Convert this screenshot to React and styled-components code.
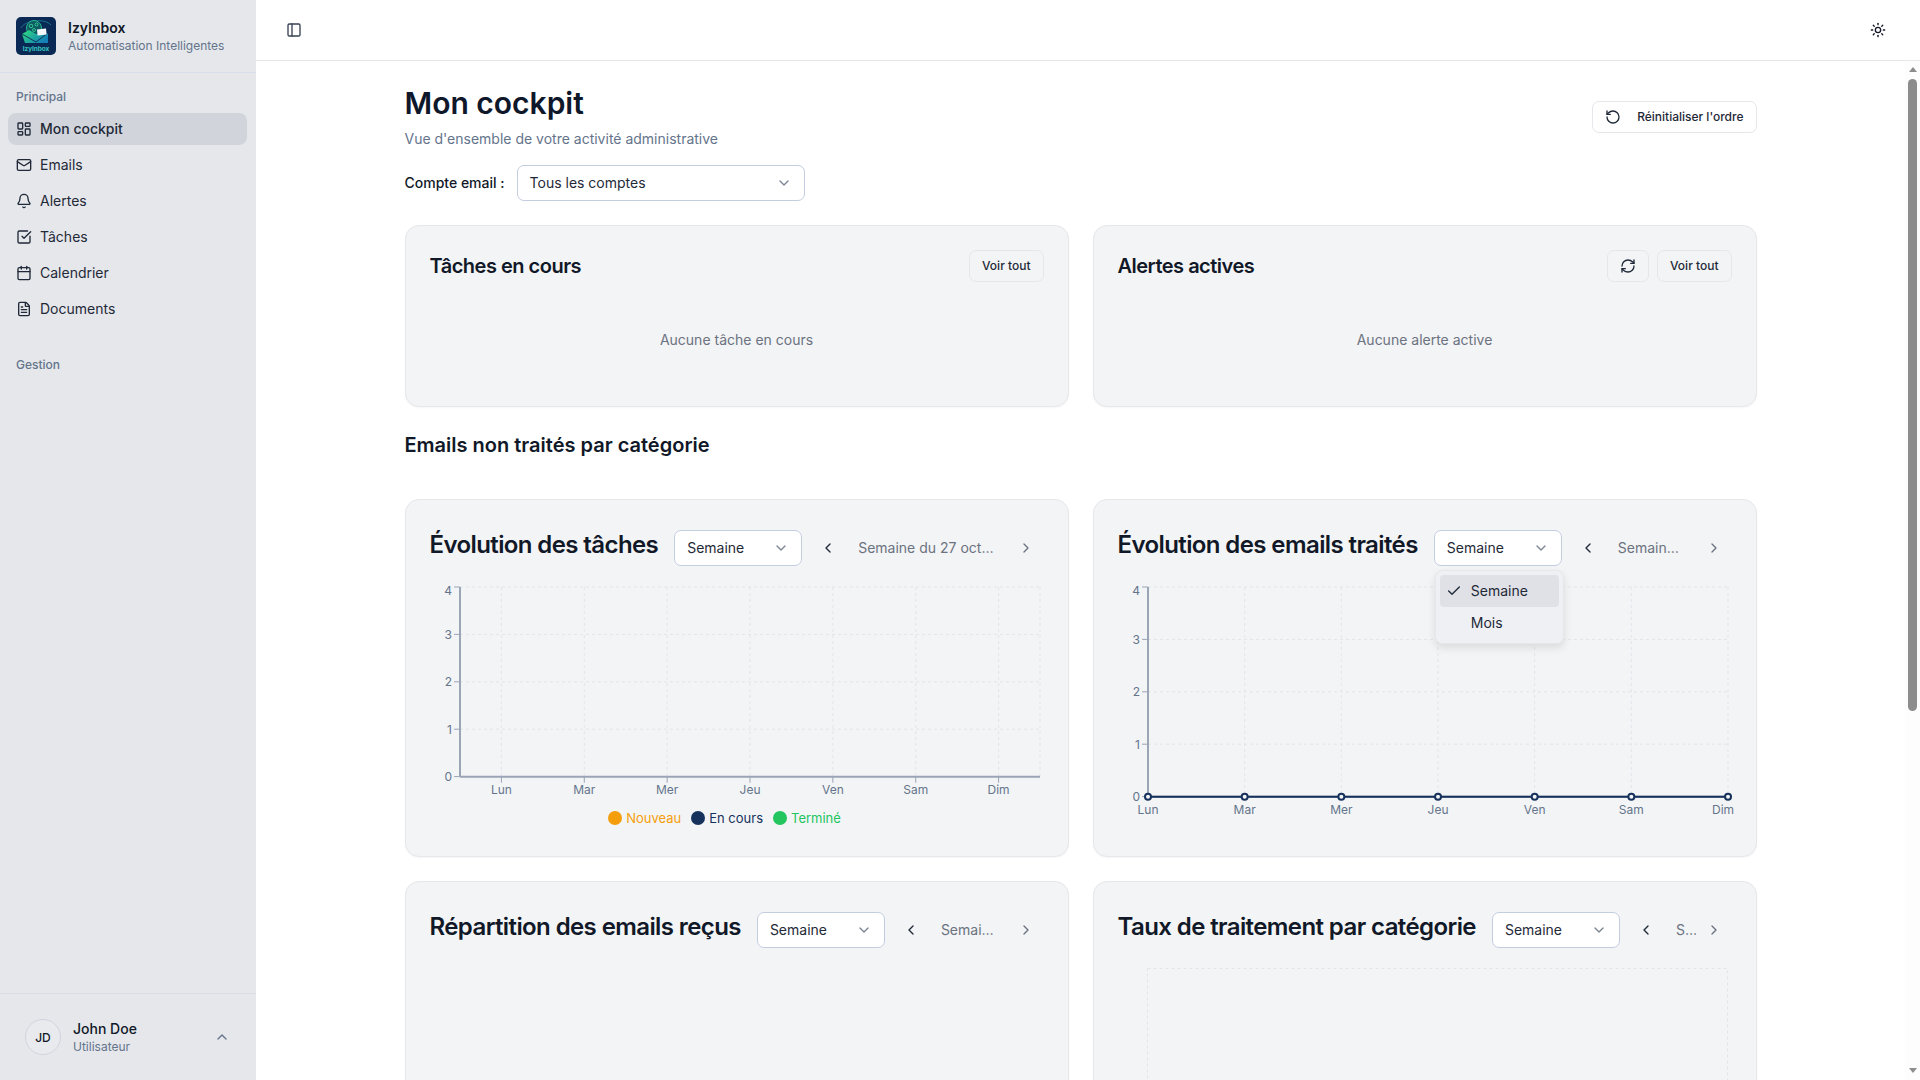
import React from 'react'
import styled, { createGlobalStyle } from 'styled-components'
import {
  PanelLeft, Sun, LayoutDashboard, Mail, Bell, SquareCheckBig, Calendar, FileText,
  RotateCcw, RefreshCw, ChevronDown, ChevronUp, ChevronLeft, ChevronRight, Check,
} from 'lucide-react'

const GlobalStyle = createGlobalStyle`
  * { box-sizing: border-box; }
  html, body { margin: 0; height: 100%; overflow: hidden; }
  body { font-family: Inter, "Liberation Sans", sans-serif; color: #111827; background: #fff; }
`

const Layout = styled.div`
  display: flex;
  height: 100vh;
`
const Sidebar = styled.aside`
  width: 256px;
  flex-shrink: 0;
  display: flex;
  flex-direction: column;
  background: #e5e7eb;
`
const Brand = styled.div`
  height: 73px;
  display: flex;
  align-items: center;
  gap: 12px;
  padding: 0 16px 1px;
  border-bottom: 1px solid #d8dfec;
`
const BrandText = styled.div`
  display: flex;
  flex-direction: column;
`
const BrandName = styled.span`
  font-size: 14px;
  line-height: 20px;
  font-weight: 600;
  color: #111827;
`
const BrandSub = styled.span`
  font-size: 12px;
  line-height: 16px;
  color: #64748b;
`
const Group = styled.div`
  padding: 8px 9px 8px 8px;
  margin-top: ${(p) => p.$gap || 0}px;
`
const GroupLabel = styled.div`
  height: 32px;
  display: flex;
  align-items: center;
  padding: 0 8px 2px;
  font-size: 12px;
  font-weight: 500;
  color: #64748b;
`
const NavList = styled.div`
  display: flex;
  flex-direction: column;
  gap: 4px;
`
const NavItem = styled.a`
  height: 32px;
  display: flex;
  align-items: center;
  gap: 8px;
  padding: 0 8px 1px;
  border-radius: 8px;
  font-size: 14px;
  color: #1f2937;
  font-weight: ${(p) => (p.$active ? 500 : 400)};
  background: ${(p) => (p.$active ? '#d1d5db' : 'transparent')};
`
const UserRow = styled.div`
  margin-top: auto;
  height: 87px;
  display: flex;
  align-items: center;
  padding: 0 26px 0 25px;
  border-top: 1px solid #d8dce6;
`
const Avatar = styled.div`
  width: 36px;
  height: 36px;
  border-radius: 50%;
  display: flex;
  align-items: center;
  justify-content: center;
  border: 1px solid #d1d5db;
  background: #e8eaee;
  font-size: 12px;
  font-weight: 500;
  color: #111827;
`
const UserText = styled.div`
  flex: 1;
  margin-left: 12px;
  display: flex;
  flex-direction: column;
`
const UserName = styled.span`
  font-size: 14px;
  line-height: 20px;
  font-weight: 500;
  color: #111827;
`
const UserRole = styled.span`
  font-size: 12px;
  line-height: 16px;
  color: #64748b;
`

const Main = styled.div`
  flex: 1;
  min-width: 0;
  display: flex;
  flex-direction: column;
`
const TopBar = styled.header`
  height: 61px;
  flex-shrink: 0;
  display: flex;
  align-items: center;
  justify-content: space-between;
  padding: 0 34px 0 30px;
  border-bottom: 1px solid #e5e7eb;
  color: #374151;
`
const Body = styled.div`
  flex: 1;
  min-height: 0;
  display: flex;
`
const Scroller = styled.div`
  flex: 1;
  min-width: 0;
  overflow: hidden;
`
const ScrollTrack = styled.div`
  width: 15px;
  flex-shrink: 0;
  display: flex;
  flex-direction: column;
  align-items: center;
  padding: 6px 0 7px;
  background: #fdfdfd;
`
const ArrowUp = styled.i`
  width: 0;
  height: 0;
  border-left: 4.5px solid transparent;
  border-right: 4.5px solid transparent;
  border-bottom: 5px solid #8c8c8c;
`
const ArrowDown = styled.i`
  margin-top: auto;
  width: 0;
  height: 0;
  border-left: 4.5px solid transparent;
  border-right: 4.5px solid transparent;
  border-top: 5px solid #8c8c8c;
`
const ScrollThumb = styled.div`
  width: 9px;
  height: 632px;
  margin-top: 7px;
  border-radius: 5px;
  background: #8c8c8c;
`
const Content = styled.div`
  max-width: 1400px;
  margin: 0 auto;
  padding: 24px;
`
const PageHead = styled.div`
  display: flex;
  align-items: center;
  justify-content: space-between;
`
const PageTitle = styled.h1`
  margin: 0;
  font-size: 30px;
  line-height: 36px;
  font-weight: 600;
  color: #0f172a;
`
const PageSub = styled.p`
  margin: 8px 0 0;
  font-size: 14px;
  line-height: 20px;
  color: #64748b;
`
const Button = styled.button`
  height: 32px;
  display: inline-flex;
  align-items: center;
  justify-content: center;
  gap: ${(p) => p.$gap || 8}px;
  padding: 0 12px 1px;
  border: 1px solid #e5e7eb;
  border-radius: 7px;
  background: ${(p) => (p.$white ? '#fff' : '#f3f4f6')};
  font-family: inherit;
  font-size: 12px;
  font-weight: 500;
  color: #1f2937;
`
const AccountRow = styled.div`
  display: flex;
  align-items: center;
  gap: 12px;
  margin-top: 16px;
`
const FieldLabel = styled.label`
  font-size: 14px;
  font-weight: 500;
  color: #111827;
  padding-bottom: 1px;
`
const SelectBox = styled.div`
  width: ${(p) => p.$width}px;
  height: 36px;
  flex-shrink: 0;
  display: flex;
  align-items: center;
  justify-content: space-between;
  padding: 0 12px 1px;
  border: 1px solid #c3cde0;
  border-radius: 7px;
  background: #fff;
  font-size: 14px;
  color: #1f2937;
  svg { color: #7b8494; }
`
const TwoCols = styled.div`
  display: grid;
  grid-template-columns: 1fr 1fr;
  gap: 24px;
  margin-top: ${(p) => p.$top}px;
`
const Card = styled.section`
  min-width: 0;
  min-height: ${(p) => p.$height}px;
  padding: 24px;
  border: 1px solid #e5e7eb;
  border-radius: 14px;
  background: #f3f4f6;
  box-shadow: 0 1px 2px rgba(0, 0, 0, 0.04);
`
const CardHead = styled.div`
  display: flex;
  align-items: center;
  justify-content: space-between;
`
const CardTitle = styled.h3`
  margin: 0;
  font-size: 20px;
  line-height: 28px;
  font-weight: 600;
  letter-spacing: -0.5px;
  color: #111827;
`
const CardActions = styled.div`
  display: flex;
  gap: 8px;
`
const Empty = styled.div`
  margin-top: 48px;
  text-align: center;
  font-size: 14px;
  line-height: 20px;
  color: #6b7280;
`
const SectionTitle = styled.h2`
  margin: 24px 0 0;
  font-size: 20px;
  line-height: 28px;
  font-weight: 600;
  color: #111827;
`
const ChartHead = styled.div`
  display: flex;
  align-items: flex-start;
  gap: 16px;
`
const ChartTitle = styled.h3`
  margin: 5px 0 0;
  flex-shrink: 0;
  font-size: 24px;
  line-height: 32px;
  font-weight: 600;
  letter-spacing: -0.6px;
  color: #111827;
`
const PickerRow = styled.div`
  flex: 1;
  min-width: 0;
  margin-top: 6px;
  display: flex;
  align-items: center;
  gap: 8px;
`
const SelectWrap = styled.div`
  position: relative;
  flex-shrink: 0;
`
const Period = styled.div`
  flex: 1;
  min-width: 0;
  display: flex;
  align-items: center;
`
const PeriodBtn = styled.span`
  width: 36px;
  height: 36px;
  flex-shrink: 0;
  display: flex;
  align-items: center;
  justify-content: center;
  color: ${(p) => (p.$muted ? '#6b7280' : '#1f2937')};
`
const PeriodText = styled.span`
  flex: 1;
  min-width: 0;
  padding: 0 12px 1px;
  text-align: center;
  white-space: nowrap;
  overflow: hidden;
  text-overflow: ellipsis;
  font-size: 14px;
  color: #6b7280;
`
const Menu = styled.div`
  position: absolute;
  z-index: 5;
  top: 40px;
  left: 1px;
  width: 129px;
  padding: 4px;
  border: 1px solid #e5e7eb;
  border-radius: 7px;
  background: #eef0f3;
  box-shadow: 0 4px 8px rgba(0, 0, 0, 0.1);
`
const MenuItem = styled.div`
  position: relative;
  height: 32px;
  display: flex;
  align-items: center;
  padding: 0 0 2px 31px;
  border-radius: 4px;
  font-size: 14px;
  color: #1f2937;
  background: ${(p) => (p.$selected ? '#dfe1e6' : 'transparent')};
  svg { position: absolute; left: 6px; top: 8px; }
`
const ChartSvg = styled.svg`
  display: block;
  margin-top: ${(p) => p.$top || 10}px;
  text { font-family: Inter, "Liberation Sans", sans-serif; font-size: 12px; fill: #64748b; }
`
const Legend = styled.div`
  display: flex;
  justify-content: center;
  gap: 10px;
  margin-top: 7px;
  padding-right: 24px;
`
const LegendItem = styled.span`
  display: flex;
  align-items: center;
  gap: 4px;
  font-size: 13px;
  line-height: 16px;
  color: ${(p) => p.$color};
`
const Dot = styled.i`
  width: 14px;
  height: 14px;
  border-radius: 50%;
  background: ${(p) => p.$color};
`

const DAYS = ['Lun', 'Mar', 'Mer', 'Jeu', 'Ven', 'Sam', 'Dim']
const NAV = [
  { label: 'Mon cockpit', icon: LayoutDashboard, active: true },
  { label: 'Emails', icon: Mail },
  { label: 'Alertes', icon: Bell },
  { label: 'Tâches', icon: SquareCheckBig },
  { label: 'Calendrier', icon: Calendar },
  { label: 'Documents', icon: FileText },
]
const LEGEND = [
  { label: 'Nouveau', color: '#f59e0b' },
  { label: 'En cours', color: '#16325c' },
  { label: 'Terminé', color: '#22c55e' },
]

const Logo = () => (
  <svg width="40" height="38" viewBox="0 0 40 38">
    <defs>
      <linearGradient id="env" x1="0" y1="0" x2="1" y2="0.6">
        <stop offset="0" stopColor="#2fe07a" />
        <stop offset="1" stopColor="#1480b8" />
      </linearGradient>
    </defs>
    <rect width="40" height="38" rx="5" fill="#0a2a55" />
    <path d="M5 11c4-8 24-10 30-3" fill="none" stroke="#1f8fa8" strokeWidth=".7" />
    <circle cx="18" cy="11" r="7.5" fill="#0d5a63" stroke="#27b78f" strokeWidth="1" />
    <circle cx="15" cy="9" r="1.8" fill="none" stroke="#3be09a" strokeWidth=".8" />
    <circle cx="20.5" cy="7.5" r="1.5" fill="none" stroke="#3be09a" strokeWidth=".8" />
    <circle cx="18" cy="13" r="1.5" fill="none" stroke="#3be09a" strokeWidth=".8" />
    <path d="M6 17 13 13l7 4 12-1v10H9z" fill="url(#env)" />
    <path d="M6 17l14 8 12-9" fill="none" stroke="#0a2a55" strokeWidth=".9" />
    <path d="M21 12.5l9-1 .6 6-9 1z" fill="#f4f8fb" />
    <text x="20" y="34" textAnchor="middle" fontSize="6.4" fontWeight="700" fill="#35c6c0" fontFamily="Inter, sans-serif">IzyInbox</text>
  </svg>
)

const ChartFrame = ({ y0, step, gap, xTicks, series, labelY }) => {
  const left = 30
  const right = 610
  const top = 11
  const xs = DAYS.map((_, i) => left + (xTicks ? gap / 2 : 0) + gap * i)
  const grid = [0, 1, 2, 3].map((i) => top + step * i)
  const stroke = '#e2e5ea'
  return (
    <ChartSvg width="616" height={labelY + 9} viewBox={`0 0 616 ${labelY + 9}`}>
      {grid.map((y) => (
        <line key={y} x1={left} x2={right} y1={y} y2={y} stroke={stroke} strokeDasharray="3 3" />
      ))}
      {xs.map((x) => (
        <line key={x} x1={x} x2={x} y1={top} y2={y0} stroke={stroke} strokeDasharray="3 3" />
      ))}
      {xTicks && <line x1={right} x2={right} y1={top} y2={y0} stroke={stroke} strokeDasharray="3 3" />}
      <line x1={left} x2={left} y1={top} y2={y0} stroke="#9aa5b6" strokeWidth="2" />
      <line x1={left} x2={right} y1={y0} y2={y0} stroke="#9aa5b6" strokeWidth="2" />
      {[4, 3, 2, 1, 0].map((v, i) => (
        <g key={v}>
          <line x1={left - 6} x2={left} y1={top + step * i} y2={top + step * i} stroke="#9aa5b6" />
          <text x={left - 8} y={top + step * i + (v === 4 ? 8 : 4.5)} textAnchor="end">{v}</text>
        </g>
      ))}
      {xTicks && xs.map((x) => <line key={x} x1={x} x2={x} y1={y0} y2={y0 + 6} stroke="#9aa5b6" />)}
      {DAYS.map((d, i) => (
        <text key={d} x={!xTicks && i === 6 ? xs[i] - 5 : xs[i]} y={labelY} textAnchor="middle">{d}</text>
      ))}
      {series && (
        <>
          <line x1={left} x2={right} y1={y0} y2={y0} stroke="#16325c" strokeWidth="2" />
          {xs.map((x) => (
            <circle key={x} cx={x} cy={y0} r="3" fill="#f3f4f6" stroke="#16325c" strokeWidth="2" />
          ))}
        </>
      )}
    </ChartSvg>
  )
}

const ChartHeader = ({ title, period, open }) => (
  <ChartHead>
    <ChartTitle>{title}</ChartTitle>
    <PickerRow>
      <SelectWrap>
        <SelectBox $width={128}>
          Semaine
          <ChevronDown size={16} />
        </SelectBox>
        {open && (
          <Menu>
            <MenuItem $selected><Check size={16} />Semaine</MenuItem>
            <MenuItem>Mois</MenuItem>
          </Menu>
        )}
      </SelectWrap>
      <Period>
        <PeriodBtn><ChevronLeft size={16} /></PeriodBtn>
        <PeriodText>{period}</PeriodText>
        <PeriodBtn $muted><ChevronRight size={16} /></PeriodBtn>
      </Period>
    </PickerRow>
  </ChartHead>
)

const App = () => {
  const period = 'Semaine du 27 oct. au 2 nov.'
  return (
    <Layout>
      <GlobalStyle />
      <Sidebar>
        <Brand>
          <Logo />
          <BrandText>
            <BrandName>IzyInbox</BrandName>
            <BrandSub>Automatisation Intelligentes</BrandSub>
          </BrandText>
        </Brand>
        <Group>
          <GroupLabel>Principal</GroupLabel>
          <NavList>
            {NAV.map(({ label, icon: Icon, active }) => (
              <NavItem key={label} $active={active}>
                <Icon size={16} />
                {label}
              </NavItem>
            ))}
          </NavList>
        </Group>
        <Group $gap={8}>
          <GroupLabel>Gestion</GroupLabel>
        </Group>
        <UserRow>
          <Avatar>JD</Avatar>
          <UserText>
            <UserName>John Doe</UserName>
            <UserRole>Utilisateur</UserRole>
          </UserText>
          <ChevronUp size={16} color="#64748b" />
        </UserRow>
      </Sidebar>
      <Main>
        <TopBar>
          <PanelLeft size={16} />
          <Sun size={16} color="#111827" />
        </TopBar>
        <Body>
          <Scroller>
            <Content>
              <PageHead>
                <div>
                  <PageTitle>Mon cockpit</PageTitle>
                  <PageSub>Vue d'ensemble de votre activité administrative</PageSub>
                </div>
                <Button $white $gap={16}>
                  <RotateCcw size={16} />
                  Réinitialiser l'ordre
                </Button>
              </PageHead>
              <AccountRow>
                <FieldLabel>Compte email :</FieldLabel>
                <SelectBox $width={288}>
                  Tous les comptes
                  <ChevronDown size={16} />
                </SelectBox>
              </AccountRow>
              <TwoCols $top={24}>
                <Card $height={182}>
                  <CardHead>
                    <CardTitle>Tâches en cours</CardTitle>
                    <Button>Voir tout</Button>
                  </CardHead>
                  <Empty>Aucune tâche en cours</Empty>
                </Card>
                <Card $height={182}>
                  <CardHead>
                    <CardTitle>Alertes actives</CardTitle>
                    <CardActions>
                      <Button><RefreshCw size={16} /></Button>
                      <Button>Voir tout</Button>
                    </CardActions>
                  </CardHead>
                  <Empty>Aucune alerte active</Empty>
                </Card>
              </TwoCols>
              <SectionTitle>Emails non traités par catégorie</SectionTitle>
              <TwoCols $top={40}>
                <Card $height={358}>
                  <ChartHeader title="Évolution des tâches" period={period} />
                  <ChartFrame y0={200.7} step={47.4} gap={82.86} xTicks labelY={218} />
                  <Legend>
                    {LEGEND.map((l) => (
                      <LegendItem key={l.label} $color={l.color}>
                        <Dot $color={l.color} />
                        {l.label}
                      </LegendItem>
                    ))}
                  </Legend>
                </Card>
                <Card $height={358}>
                  <ChartHeader title="Évolution des emails traités" period={period} open />
                  <ChartFrame y0={220.7} step={52.4} gap={96.67} series labelY={238} />
                </Card>
              </TwoCols>
              <TwoCols $top={24}>
                <Card $height={358}>
                  <ChartHeader title="Répartition des emails reçus" period={period} />
                </Card>
                <Card $height={358}>
                  <ChartHeader title="Taux de traitement par catégorie" period={period} />
                  <ChartSvg $top={20} width="616" height="250" viewBox="0 0 616 250">
                    <rect x="29.5" y="0.5" width="580" height="240" fill="none" stroke="#e2e5ea" strokeDasharray="3 3" />
                  </ChartSvg>
                </Card>
              </TwoCols>
            </Content>
          </Scroller>
          <ScrollTrack>
            <ArrowUp />
            <ScrollThumb />
            <ArrowDown />
          </ScrollTrack>
        </Body>
      </Main>
    </Layout>
  )
}

export default App
